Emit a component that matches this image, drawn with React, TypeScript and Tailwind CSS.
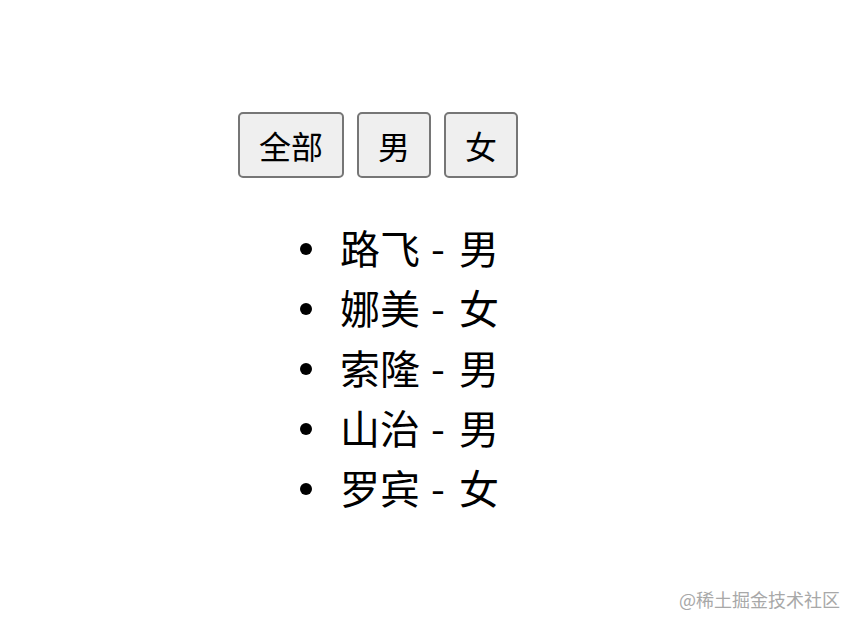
import React, { useState } from 'react'

type Person = { name: string; gender: '男' | '女' }

const people: Person[] = [
  { name: '路飞', gender: '男' },
  { name: '娜美', gender: '女' },
  { name: '索隆', gender: '男' },
  { name: '山治', gender: '男' },
  { name: '罗宾', gender: '女' },
]

const filters = ['全部', '男', '女'] as const

export default function App() {
  const [filter, setFilter] = useState<(typeof filters)[number]>('全部')
  const shown = filter === '全部' ? people : people.filter((p) => p.gender === filter)

  return (
    <div
      className="relative w-[860px] h-[630px] bg-white text-black"
      style={{ fontFamily: '"Noto Sans CJK SC", "Noto Sans", sans-serif' }}
    >
      <div className="flex gap-[13px] pt-[112px] pl-[238px]">
        {filters.map((f) => (
          <button
            key={f}
            onClick={() => setFilter(f)}
            className="h-[66px] px-[19px] text-[32px] leading-none border-2 border-[#767676] rounded-[5px] bg-[#efefef]"
          >
            {f}
          </button>
        ))}
      </div>
      <ul className="mt-[39px] pl-[300px] text-[40px] leading-[60px]">
        {shown.map((p) => (
          <li key={p.name} className="flex items-center">
            <span className="w-[12px] h-[12px] mt-[4px] rounded-full bg-black mr-[28px]" />
            <span>{p.name}</span>
            <span className="ml-[11px] mr-[14px]">-</span>
            <span>{p.gender}</span>
          </li>
        ))}
      </ul>
      <div className="absolute right-[20px] bottom-[17px] text-[18px] text-[#a8a8a8]">
        @稀土掘金技术社区
      </div>
    </div>
  )
}
